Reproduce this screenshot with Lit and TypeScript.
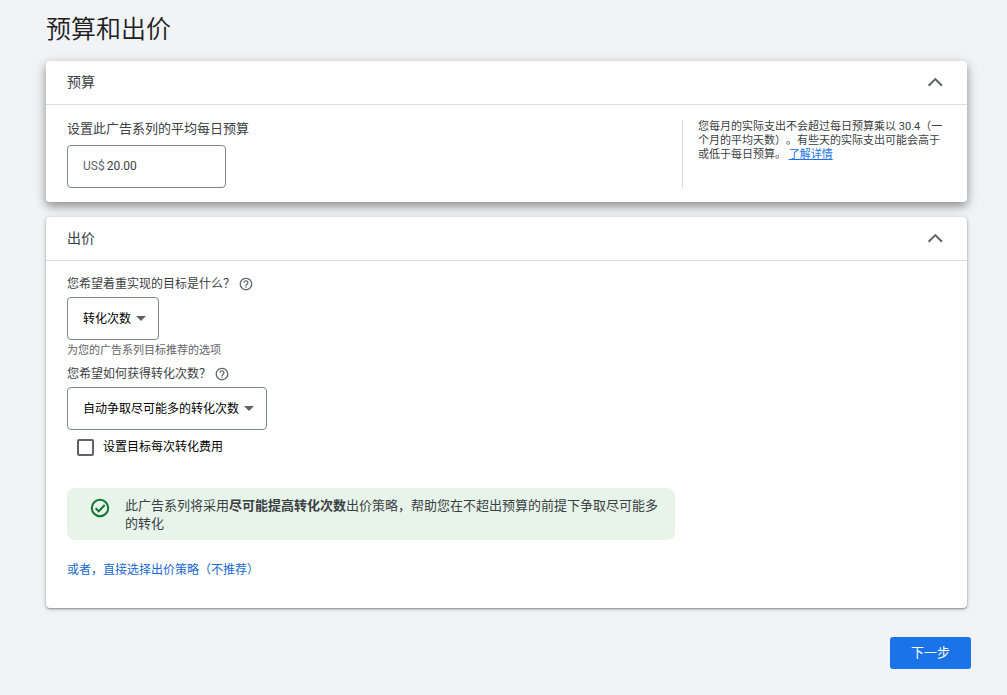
import { LitElement, html, css } from "lit";
import { customElement, property, state } from "lit/decorators.js";

@customElement("collapse-card")
class CollapseCard extends LitElement {
  static styles = css`
    :host {
      display: block;
      background: #fff;
      border-radius: 4px;
      box-shadow: 0 1px 2px rgba(60, 64, 67, 0.5), 0 1px 5px rgba(60, 64, 67, 0.2);
    }
    :host([raised]) {
      box-shadow: 0 4px 8px rgba(0, 0, 0, 0.3), 0 4px 14px rgba(0, 0, 0, 0.16);
    }
    .header {
      display: flex;
      align-items: center;
      justify-content: space-between;
      box-sizing: border-box;
      height: 44px;
      padding: 0 20px 1px 21px;
      border-bottom: 1px solid #dadce0;
    }
    .title {
      margin: 0;
      font-size: 14px;
      line-height: 20px;
      font-weight: 400;
      color: #3c4043;
    }
    .toggle {
      display: flex;
      padding: 0;
      border: 0;
      background: none;
      cursor: pointer;
    }
    .closed {
      transform: rotate(180deg);
    }
  `;

  @property() heading = "";
  @state() open = true;

  render() {
    return html`
      <div class="header">
        <h2 class="title">${this.heading}</h2>
        <button
          class="toggle"
          aria-label=${this.heading}
          aria-expanded=${this.open}
          @click=${() => (this.open = !this.open)}
        >
          <svg class=${this.open ? "" : "closed"} width="24" height="24" viewBox="0 0 24 24" fill="none" stroke="#5f6368" stroke-width="2">
            <path d="M5.600 15.800 12.300 9.100l6.700 6.700" />
          </svg>
        </button>
      </div>
      ${this.open ? html`<slot></slot>` : ""}
    `;
  }
}

const helpIcon = html`
  <svg width="14" height="14" viewBox="1 1 22 22" fill="#5f6368">
    <path
      d="M11 18h2v-2h-2v2zm1-16C6.48 2 2 6.48 2 12s4.48 10 10 10 10-4.480 10-10S17.520 2 12 2zm0 18c-4.410 0-8-3.590-8-8s3.590-8 8-8 8 3.590 8 8-3.590 8-8 8zm0-14c-2.210 0-4 1.790-4 4h2c0-1.100.900-2 2-2s2 .900 2 2c0 2-3 1.750-3 5h2c0-2.250 3-2.500 3-5 0-2.210-1.790-4-4-4z"
    />
  </svg>
`;

const arrowIcon = html`
  <svg class="arrow" width="10" height="5" viewBox="0 0 10 5" fill="#5f6368">
    <path d="M0 0h10L5 5z" />
  </svg>
`;

const checkIcon = html`
  <svg width="20" height="20" viewBox="0 0 20 20" fill="none" stroke="#137333" stroke-width="2">
    <circle cx="10" cy="10" r="8.2" />
    <path d="M5.600 10.300 8.700 13.300 14.700 7" />
  </svg>
`;

@customElement("app-root")
class AppRoot extends LitElement {
  static styles = css`
    :host {
      display: block;
      box-sizing: border-box;
      min-height: 100vh;
      padding: 12px 40px 26px 46px;
      background: #f1f3f4;
      font-family: Roboto, "Noto Sans CJK SC", sans-serif;
      font-size: 12px;
      line-height: 18px;
      color: #3c4043;
      text-spacing-trim: space-all;
    }
    button,
    input,
    select {
      font: inherit;
      color: inherit;
    }
    .page-title {
      margin: 0 0 13px;
      font-size: 25px;
      line-height: 36px;
      font-weight: 350;
      color: #202124;
    }
    .cards {
      display: grid;
      gap: 15px;
    }
    .budget {
      display: flex;
      justify-content: space-between;
      padding: 15px 20px 14px 21px;
    }
    .budget-label {
      display: block;
      margin-bottom: 7px;
      font-size: 13px;
    }
    .money {
      display: flex;
      align-items: center;
      gap: 2px;
      box-sizing: border-box;
      width: 159px;
      height: 43px;
      padding: 0 15px 2px;
      border: 1px solid #80868b;
      border-radius: 4px;
    }
    .currency {
      color: #5f6368;
    }
    .amount {
      flex: 1;
      min-width: 0;
      padding: 0;
      border: 0;
      outline: 0;
      background: none;
    }
    .note {
      box-sizing: border-box;
      width: 265px;
      margin: 0;
      padding-left: 15px;
      border-left: 1px solid #dadce0;
      font-size: 11px;
      line-height: 14px;
    }
    .more {
      color: #1a73e8;
      text-decoration: underline;
    }
    .bidding {
      display: flex;
      flex-direction: column;
      align-items: flex-start;
      padding: 14px 21px 29px;
    }
    .question {
      display: flex;
      align-items: center;
      gap: 4px;
      margin-bottom: 4px;
    }
    .help {
      display: flex;
      padding: 0;
      border: 0;
      background: none;
    }
    .picker {
      display: grid;
      align-items: center;
      color: #000;
    }
    .picker > * {
      grid-area: 1 / 1;
    }
    .choice {
      appearance: none;
      height: 43px;
      padding: 0 26px 0 15px;
      border: 1px solid #80868b;
      border-radius: 4px;
      background: #fff;
    }
    .arrow {
      justify-self: end;
      margin-right: 13px;
      pointer-events: none;
    }
    .hint {
      margin: 2px 0 5px;
      font-size: 11px;
      color: #5f6368;
    }
    .option {
      display: flex;
      align-items: center;
      gap: 9px;
      margin: 8px 0 32px 10px;
      color: #000;
    }
    .box {
      appearance: none;
      width: 17px;
      height: 17px;
      margin: 0;
      border: 2px solid #5f6368;
      border-radius: 2px;
    }
    .box:checked {
      background: #1a73e8;
      border-color: #1a73e8;
    }
    .notice {
      display: flex;
      gap: 15px;
      box-sizing: border-box;
      max-width: 608px;
      margin-bottom: 21px;
      padding: 9px 16px 7px 23px;
      border-radius: 8px;
      background: #e6f4ea;
      font-size: 13px;
    }
    .notice svg {
      flex: none;
      margin-top: 1px;
    }
    .notice-text {
      margin: 0;
    }
    .direct {
      color: #1967d2;
      text-decoration: none;
    }
    .actions {
      display: flex;
      justify-content: flex-end;
      margin: 29px -4px 0 0;
    }
    .next {
      height: 32px;
      padding: 0 21px;
      border: 0;
      border-radius: 3px;
      background: #1a73e8;
      font-size: 13px;
      color: #fff;
      cursor: pointer;
    }
  `;

  private picker(id: string, label: string) {
    return html`
      <div class="picker">
        <select class="choice" id=${id}>
          <option>${label}</option>
        </select>
        ${arrowIcon}
      </div>
    `;
  }

  private question(target: string, text: string) {
    return html`
      <div class="question">
        <label for=${target}>${text}</label>
        <button class="help" aria-label="帮助">${helpIcon}</button>
      </div>
    `;
  }

  render() {
    return html`
      <h1 class="page-title">预算和出价</h1>
      <main class="cards">
        <collapse-card heading="预算" raised>
          <div class="budget">
            <div>
              <label class="budget-label" for="amount">设置此广告系列的平均每日预算</label>
              <div class="money">
                <span class="currency">US$</span>
                <input class="amount" id="amount" type="text" value="20.00" />
              </div>
            </div>
            <p class="note">
              您每月的实际支出不会超过每日预算乘以 30.4（一个月的平均天数）。有些天的实际支出可能会高于或低于每日预算。
              <a class="more" href="#">了解详情</a>
            </p>
          </div>
        </collapse-card>
        <collapse-card heading="出价">
          <div class="bidding">
            ${this.question("goal", "您希望着重实现的目标是什么？")}
            ${this.picker("goal", "转化次数")}
            <p class="hint">为您的广告系列目标推荐的选项</p>
            ${this.question("method", "您希望如何获得转化次数？")}
            ${this.picker("method", "自动争取尽可能多的转化次数")}
            <label class="option">
              <input class="box" type="checkbox" />
              设置目标每次转化费用
            </label>
            <div class="notice">
              ${checkIcon}
              <p class="notice-text">
                此广告系列将采用<b>尽可能提高转化次数</b>出价策略，帮助您在不超出预算的前提下争取尽可能多的转化
              </p>
            </div>
            <a class="direct" href="#">或者，直接选择出价策略（不推荐）</a>
          </div>
        </collapse-card>
      </main>
      <div class="actions">
        <button class="next">下一步</button>
      </div>
    `;
  }
}
